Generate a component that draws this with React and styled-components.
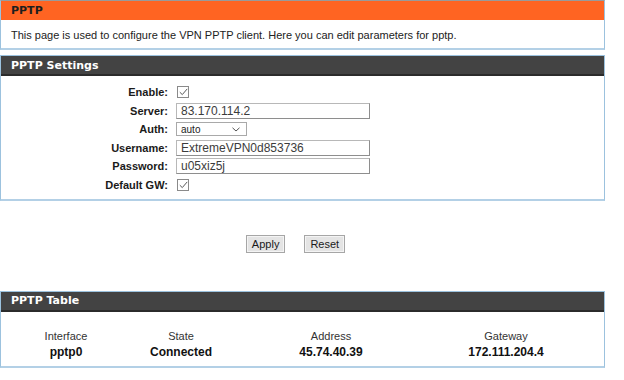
import React from 'react'
import styled, { createGlobalStyle } from 'styled-components'

const GlobalStyle = createGlobalStyle`
  body {
    margin: 0;
    background: #ffffff;
    font-family: 'Liberation Sans', Arial, sans-serif;
    color: #222222;
  }
`

const Page = styled.div`
  width: 605px;
  display: flex;
  flex-direction: column;
`

const Panel = styled.section`
  box-sizing: border-box;
  border: 1px solid #9cc2de;
  border-bottom: 2px solid #b3d0e6;
  border-top-color: ${({ $variant }) => ($variant === 'orange' ? '#9a9a9a' : '#9cc2de')};
  margin-top: ${({ $gap }) => $gap || 0}px;
  background: #ffffff;
`

const Header = styled.div`
  height: ${({ $variant }) => ($variant === 'orange' ? '19px' : '18px')};
  display: flex;
  align-items: center;
  padding-left: 10px;
  background: ${({ $variant }) => ($variant === 'orange' ? '#ff6422' : '#434343')};
  border-bottom: ${({ $variant }) => ($variant === 'orange' ? 'none' : '2px solid #2b2b2b')};
  color: ${({ $variant }) => ($variant === 'orange' ? '#1e1e1e' : '#ffffff')};
  font-family: 'DejaVu Sans', Verdana, sans-serif;
  font-weight: bold;
  font-size: 11px;
`

const Intro = styled.p`
  margin: 0;
  height: 28px;
  display: flex;
  align-items: center;
  padding: 1px 0 0 10px;
  box-sizing: border-box;
  font-size: 11px;
`

const Form = styled.div`
  display: grid;
  grid-template-columns: 167px 1fr;
  column-gap: 8px;
  row-gap: 2.5px;
  padding: 8px 0 6px;
  align-items: center;
`

const Label = styled.label`
  text-align: right;
  font-weight: bold;
  font-size: 11px;
  color: #1a1a1a;
  line-height: 16px;
`

const Field = styled.div`
  display: flex;
  align-items: center;
  height: ${({ $h }) => $h || 16}px;
`

const Box = styled.span`
  box-sizing: border-box;
  width: 12px;
  height: 12px;
  margin-left: 1px;
  border: 1px solid #8a8a8a;
  background: #ffffff;
  display: flex;
  align-items: center;
  justify-content: center;
`

const TextInput = styled.div`
  box-sizing: border-box;
  width: 194px;
  height: 16px;
  border: 1px solid #b8b8b8;
  border-right-color: #8e8e8e;
  border-bottom-color: #8e8e8e;
  padding-left: 4px;
  display: flex;
  align-items: center;
  font-size: 12px;
  color: #3c3c3c;
`

const Select = styled.div`
  box-sizing: border-box;
  width: 71px;
  height: 14px;
  border: 1px solid #a9a9a9;
  padding: 0 6px 0 4px;
  display: flex;
  align-items: center;
  justify-content: space-between;
  font-size: 10px;
  color: #222222;
`

const Actions = styled.div`
  display: flex;
  justify-content: center;
  gap: 19px;
  padding: 34px 14px 0 0;
  margin-bottom: 38px;
`

const Button = styled.button`
  box-sizing: border-box;
  height: 18px;
  padding: 0 5px;
  border: 1px solid #a6a6a6;
  background: #e4e4e4;
  box-shadow: inset 0 0 0 1px #f4f4f4;
  font-family: 'Liberation Sans', Arial, sans-serif;
  font-size: 11px;
  color: #1a1a1a;
  border-radius: 0;
`

const Table = styled.div`
  display: grid;
  grid-template-columns: 130px 100px 200px 150px;
  row-gap: 2px;
  padding: 17px 0 7px;
  text-align: center;
`

const Cell = styled.div`
  font-size: ${({ $bold }) => ($bold ? 12 : 11)}px;
  font-weight: ${({ $bold }) => ($bold ? 'bold' : 'normal')};
  color: ${({ $bold }) => ($bold ? '#111111' : '#333333')};
  line-height: 14px;
`

const Check = () => (
  <Box>
    <svg width="9" height="8" viewBox="0 0 9 8">
      <path d="M0.8 4.2 L3.3 6.6 L8.2 0.9" fill="none" stroke="#5a5a5a" strokeWidth="1" />
    </svg>
  </Box>
)

const Chevron = () => (
  <svg width="8" height="5" viewBox="0 0 8 5">
    <path d="M0.5 0.8 L4 4 L7.5 0.8" fill="none" stroke="#555" strokeWidth="1" />
  </svg>
)

const columns = [
  ['Interface', 'pptp0'],
  ['State', 'Connected'],
  ['Address', '45.74.40.39'],
  ['Gateway', '172.111.204.4'],
]

export default function App() {
  return (
    <Page>
      <GlobalStyle />
      <Panel $variant="orange">
        <Header $variant="orange">PPTP</Header>
        <Intro>This page is used to configure the VPN PPTP client. Here you can edit parameters for pptp.</Intro>
      </Panel>

      <Panel $gap={5}>
        <Header>PPTP Settings</Header>
        <Form>
          <Label>Enable:</Label>
          <Field><Check /></Field>
          <Label>Server:</Label>
          <Field><TextInput>83.170.114.2</TextInput></Field>
          <Label>Auth:</Label>
          <Field $h={14}>
            <Select>auto<Chevron /></Select>
          </Field>
          <Label>Username:</Label>
          <Field><TextInput>ExtremeVPN0d853736</TextInput></Field>
          <Label>Password:</Label>
          <Field><TextInput>u05xiz5j</TextInput></Field>
          <Label>Default GW:</Label>
          <Field><Check /></Field>
        </Form>
      </Panel>

      <Actions>
        <Button>Apply</Button>
        <Button>Reset</Button>
      </Actions>

      <Panel>
        <Header>PPTP Table</Header>
        <Table>
          {columns.map(([title]) => (
            <Cell key={title}>{title}</Cell>
          ))}
          {columns.map(([title, value]) => (
            <Cell key={title + 'v'} $bold>{value}</Cell>
          ))}
        </Table>
      </Panel>
    </Page>
  )
}
